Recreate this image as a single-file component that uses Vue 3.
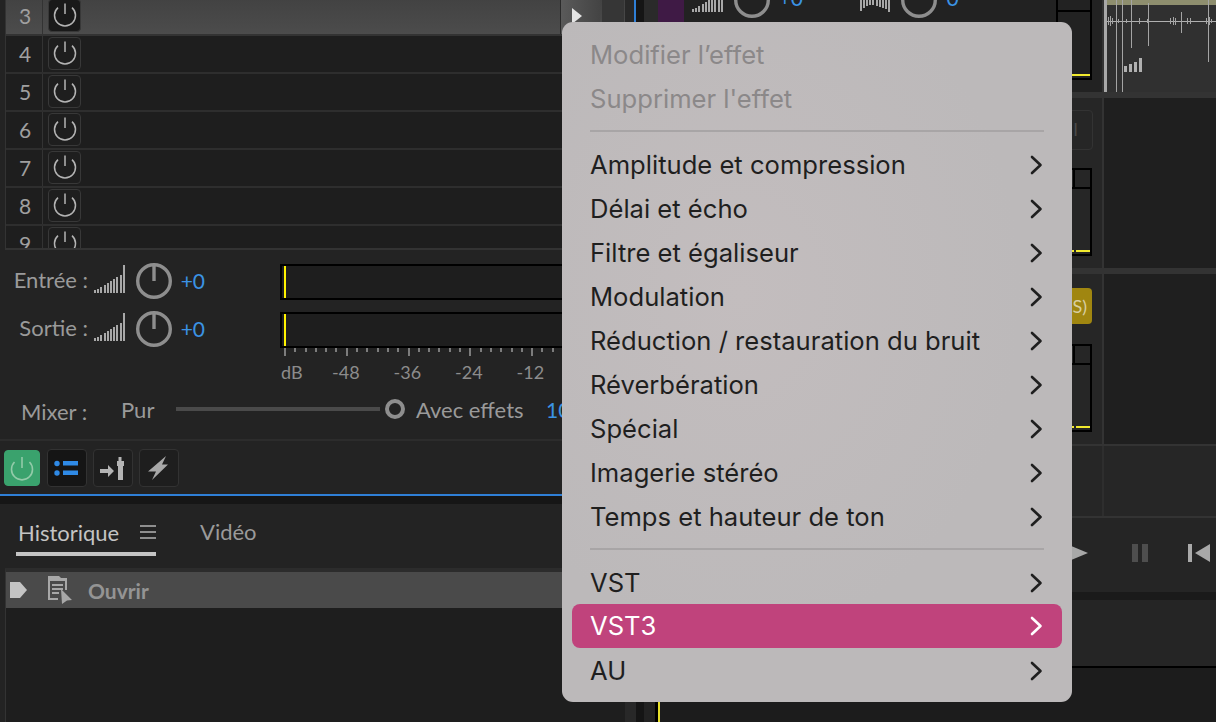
<script setup>
const rows = [3, 4, 5, 6, 7, 8, 9]
const levels = ['Entrée :', 'Sortie :']
const bars = [3, 4, 6, 8, 10, 12, 14, 16, 18, 28]
const hanging = [11, 8, 6, 5, 5, 6, 7, 8, 9, 12]
const ticks = Array.from({ length: 30 }, (_, i) => i)
const scale = ['dB', '-48', '-36', '-24', '-12']
const waveLines = [
  [12, 0, 92], [18, 0, 92], [27, 0, 48], [44, 3, 46], [77, 12, 33], [104, 0, 62],
  [4, 17, 25], [6, 16, 26], [8, 18, 24], [14, 19, 23], [22, 19, 23], [35, 18, 24],
  [43, 19, 23], [66, 18, 24], [69, 17, 25], [71, 18, 25], [83, 18, 24], [86, 18, 24],
  [102, 18, 24], [105, 17, 25], [107, 19, 23],
]
const signal = [
  { x: 20, h: 6 },
  { x: 25, h: 8 },
  { x: 30, h: 10 },
  { x: 35, h: 14 },
]
const menuGroups = [
  [
    { label: 'Modifier l’effet', off: true },
    { label: "Supprimer l'effet", off: true },
  ],
  [
    { label: 'Amplitude et compression', sub: true },
    { label: 'Délai et écho', sub: true },
    { label: 'Filtre et égaliseur', sub: true },
    { label: 'Modulation', sub: true },
    { label: 'Réduction / restauration du bruit', sub: true },
    { label: 'Réverbération', sub: true },
    { label: 'Spécial', sub: true },
    { label: 'Imagerie stéréo', sub: true },
    { label: 'Temps et hauteur de ton', sub: true },
  ],
  [
    { label: 'VST', sub: true },
    { label: 'VST3', sub: true, active: true },
    { label: 'AU', sub: true },
  ],
]
</script>

<template>
  <div class="screen">
    <section class="left">
      <div class="rack">
        <div v-for="n in rows" :key="n" class="rack-row" :class="{ current: n === 3 }">
          <span class="num">{{ n }}</span>
          <span class="power">
            <svg width="28" height="28" viewBox="0 0 28 28" fill="none" stroke="#b4b4b4" stroke-width="1.5">
              <path d="M7 6.6A10.5 10.5 0 1 0 21 6.6" />
              <path d="M14 2.5V13" />
            </svg>
          </span>
          <template v-if="n === 3">
            <span class="row-arrow"><i></i></span>
            <span class="row-side"></span>
          </template>
        </div>
      </div>

      <div class="levels">
        <div class="level-col">
          <div v-for="l in levels" :key="l" class="level">
            <span class="level-name">{{ l }}</span>
            <span class="bars"><i v-for="(b, i) in bars" :key="i" :style="{ height: b + 'px' }"></i></span>
            <svg class="knob" width="38" height="38" viewBox="0 0 38 38" fill="none" stroke="#8e8e8e" stroke-width="3.4">
              <circle cx="19" cy="19" r="16.3" />
              <path d="M19 3v16" />
            </svg>
            <span class="blue lift">+0</span>
          </div>
        </div>
        <div class="meter-col">
          <div class="meter"><i></i></div>
          <div class="meter"><i></i></div>
          <div class="ticks">
            <i v-for="t in ticks" :key="t" :class="{ major: t % 6 === 0 }"></i>
          </div>
          <div class="scale">
            <span v-for="s in scale" :key="s">{{ s }}</span>
          </div>
        </div>
      </div>

      <div class="mixer">
        <span class="mix-label">Mixer :</span>
        <span class="mix-pur">Pur</span>
        <span class="track"></span>
        <span class="knob-dot"></span>
        <span class="mix-avec">Avec effets</span>
        <span class="blue">100 %</span>
      </div>

      <div class="tools">
        <button class="tool green">
          <svg width="26" height="26" viewBox="0 0 26 26" fill="none" stroke="#93cba9" stroke-width="1.6">
            <path d="M5.5 7A10.5 10.5 0 1 0 20.5 7" />
            <path d="M13 2v11" />
          </svg>
        </button>
        <button class="tool wide dark">
          <svg width="26" height="16" viewBox="0 0 26 16" fill="#2f8ae6">
            <circle cx="3" cy="3.5" r="2.7" />
            <circle cx="3" cy="13" r="2.7" />
            <rect x="9" y="1" width="15" height="4.5" />
            <rect x="9" y="10.5" width="15" height="4.5" />
          </svg>
        </button>
        <button class="tool wide">
          <svg width="26" height="26" viewBox="0 0 26 26" fill="#b4b4b4">
            <path d="M0 14h8V10l6 6-6 6v-4H0z" />
            <rect x="18.5" y="2" width="3" height="4" />
            <rect x="17" y="6" width="7" height="5" />
            <rect x="18" y="11" width="5" height="14" />
          </svg>
        </button>
        <button class="tool wide">
          <svg width="22" height="26" viewBox="0 0 22 26" fill="#a8a8a8">
            <path d="M18 1 0 16.5h8L4 25 20 9.5h-6z" />
          </svg>
        </button>
      </div>

      <div class="history">
        <div class="tabs">
          <div class="tab-on">
            <span>Historique</span>
            <svg width="16" height="14" viewBox="0 0 16 14" stroke="#b4b4b4" stroke-width="1.4"><path d="M0 1h16M0 7h16M0 13h16" /></svg>
          </div>
          <span class="tab-off">Vidéo</span>
        </div>
        <div class="hist-list">
          <div class="hist-row">
            <svg class="play" width="18" height="18" viewBox="0 0 18 18" fill="#c4c4c4"><path d="M0 1h10l7 8-7 8H0z" /></svg>
            <svg class="doc" width="24" height="28" viewBox="0 0 24 28" fill="#a8a8a8">
              <path d="M0 0h11l2 2h6v12h-2V5H2v17h8v2H0z" />
              <rect x="4" y="8" width="11" height="2" />
              <rect x="4" y="12" width="11" height="2" />
              <rect x="4" y="16" width="7" height="2" />
              <path d="M13 13l11 11-5 .4L14 28z" />
            </svg>
            <span class="hist-text">Ouvrir</span>
          </div>
        </div>
      </div>
    </section>

    <section class="stage">
      <div class="line-row first">
        <div class="cell">
          <div class="top-strip">
            <span class="gutter"></span>
            <span class="edge"></span>
            <span class="black"></span>
            <span class="lane"></span>
            <span class="purple"></span>
            <div class="strip-body">
              <span class="bars cut"><i v-for="(b, i) in bars" :key="i" :style="{ height: b + 'px' }"></i></span>
              <svg class="knob cut-knob" width="38" height="38" viewBox="0 0 38 38" fill="none" stroke="#8e8e8e" stroke-width="3.4">
                <circle cx="19" cy="19" r="16.3" />
              </svg>
              <span class="blue cut-val">+0</span>
              <span class="bars hang"><i v-for="(b, i) in hanging" :key="i" :style="{ height: b + 'px' }"></i></span>
              <svg class="knob cut-knob" width="38" height="38" viewBox="0 0 38 38" fill="none" stroke="#8e8e8e" stroke-width="3.4">
                <circle cx="19" cy="19" r="16.3" />
              </svg>
              <span class="blue cut-val">0</span>
              <div class="top-fader">
                <span class="top-cap"></span>
                <div class="yellow"><i class="long"></i></div>
              </div>
            </div>
          </div>
        </div>
        <div class="cell side wave">
          <svg width="112" height="92" viewBox="0 0 112 92">
            <rect x="0" y="0" width="112" height="5" fill="#8e8e6e" />
            <rect x="0" y="0" width="3" height="92" fill="#a8a8a8" />
            <rect x="3" y="21" width="109" height="1" fill="#b0b0b0" />
            <rect v-for="l in waveLines" :key="l[0]" :x="l[0]" :y="l[1]" width="1" :height="l[2] - l[1]" fill="#a4a4a4" />
            <rect v-for="s in signal" :key="s.x" :x="s.x" :y="72 - s.h" width="3" :height="s.h" fill="#b0b0b0" />
          </svg>
        </div>
      </div>
      <div class="band"></div>
      <div class="line-row second">
        <div class="cell channel">
          <span class="chip">I</span>
          <div class="fader">
            <div class="cap"><i></i></div>
            <div class="yellow"><i class="dot"></i><i class="long"></i></div>
          </div>
        </div>
        <div class="cell side"></div>
      </div>
      <div class="band"></div>
      <div class="line-row second">
        <div class="cell channel">
          <span class="chip amber">(S)</span>
          <div class="fader">
            <div class="cap"><i></i></div>
            <div class="yellow"><i class="dot"></i><i class="long"></i></div>
          </div>
        </div>
        <div class="cell side"></div>
      </div>
      <div class="thin"></div>
      <div class="line-row fourth">
        <div class="cell"></div>
        <div class="cell side"></div>
      </div>
      <div class="thin"></div>
      <div class="transport">
        <i class="tri"></i>
        <span class="pause"><i></i><i></i></span>
        <span class="back"><i></i><i class="tri-back"></i></span>
      </div>
      <div class="dark-band"></div>
      <div class="lower"></div>
      <div class="bottom">
        <span class="gutter wide-g"></span>
        <span class="black"></span>
        <span class="lane short"></span>
        <span class="cursor"></span>
      </div>
    </section>

    <div class="menu">
      <template v-for="(group, g) in menuGroups" :key="g">
        <hr v-if="g > 0" />
        <div
          v-for="item in group"
          :key="item.label"
          class="item"
          :class="{ off: item.off, active: item.active }"
        >
          <span class="item-text">{{ item.label }}</span>
          <svg v-if="item.sub" width="14" height="20" viewBox="0 0 14 20" fill="none" stroke="currentColor" stroke-width="2.6" stroke-linecap="round" stroke-linejoin="round">
            <path d="M2 2 10.5 10 2 18" />
          </svg>
        </div>
      </template>
    </div>
  </div>
</template>

<style>
html,
body {
  margin: 0;
  background: #1e1e1e;
}
</style>

<style scoped>
.screen {
  position: relative;
  width: 1216px;
  height: 722px;
  overflow: hidden;
  display: flex;
  background: #232323;
  font-family: Lato, "Open Sans", sans-serif;
  font-size: 22px;
  color: #9a9a9a;
}
i {
  display: block;
}
.left {
  width: 625px;
  flex-shrink: 0;
  display: flex;
  flex-direction: column;
}
.rack {
  height: 250px;
  margin: -2px 0 0 5px;
  border-left: 1px solid #333;
  border-bottom: 2px solid #333;
  background: #1e1e1e;
  overflow: hidden;
  flex-shrink: 0;
}
.rack-row {
  height: 36px;
  border-bottom: 2px solid #2e2e2e;
  display: flex;
  align-items: center;
}
.rack-row.current {
  background: linear-gradient(#424242, #4c4c4c);
  border-bottom-color: #333;
}
.num {
  width: 37px;
  height: 100%;
  margin-right: 5px;
  border-right: 1px solid #333;
  text-align: center;
  font-size: 21px;
  line-height: 35px;
  padding-left: 2px;
  box-sizing: border-box;
  color: #a0a0a0;
  flex-shrink: 0;
}
.power {
  width: 33px;
  height: 33px;
  margin-top: -2px;
  border: 1px solid #383838;
  border-radius: 4px;
  display: flex;
  align-items: center;
  justify-content: center;
  background: #1e1e1e;
  box-sizing: border-box;
  flex-shrink: 0;
}
.current .power {
  background: #191919;
}
.row-arrow {
  margin-left: auto;
  width: 40px;
  height: 100%;
  background: linear-gradient(90deg, #5a5a5a, #444);
  border-left: 1px solid #2a2a2a;
  box-sizing: border-box;
}
.row-arrow i {
  margin: 10px 0 0 11px;
  width: 0;
  height: 0;
  border-left: 10px solid #e4e4e4;
  border-top: 8px solid transparent;
  border-bottom: 8px solid transparent;
}
.row-side {
  width: 22px;
  height: 100%;
  margin: 0 1px 0 2px;
  background: #363636;
}
.levels {
  display: flex;
  height: 135px;
  flex-shrink: 0;
}
.level-col {
  width: 280px;
  flex-shrink: 0;
  padding-top: 7px;
}
.level {
  height: 48px;
  display: flex;
  align-items: center;
}
.level-name {
  width: 88px;
  text-align: right;
  margin: -3px 6px 0 0;
  white-space: nowrap;
  flex-shrink: 0;
}
.bars {
  display: flex;
  align-items: flex-end;
  gap: 1.2px;
  height: 28px;
  margin-right: 10px;
  margin-top: -4px;
  flex-shrink: 0;
}
.bars i {
  width: 2px;
  background: #a8a8a8;
}
.knob {
  margin-right: 8px;
  flex-shrink: 0;
}
.blue {
  color: #3b93e4;
  font-size: 21px;
  white-space: nowrap;
}
.lift {
  margin-top: -2px;
}
.meter-col {
  flex: 1;
  padding-top: 14px;
  min-width: 0;
}
.meter {
  height: 36px;
  margin-bottom: 12px;
  border: 2px solid #000;
  border-right: none;
  background: #1e1e1e;
  box-sizing: border-box;
  padding-left: 2px;
}
.meter i {
  width: 2px;
  height: 100%;
  background: #fff200;
}
.ticks {
  display: flex;
  margin: -12px 0 0 4px;
  height: 8px;
  align-items: flex-start;
}
.ticks i {
  width: 2px;
  height: 4px;
  margin-right: 8.3px;
  background: #7c7c7c;
  flex-shrink: 0;
}
.ticks i.major {
  height: 8px;
}
.scale {
  display: flex;
  font-size: 18px;
  line-height: 24px;
  color: #8c8c8c;
  margin: 4px 0 0 1px;
}
.scale span {
  width: 61.5px;
}
.scale span:first-child {
  width: 51px;
}
.mixer {
  height: 56px;
  box-sizing: border-box;
  flex-shrink: 0;
  display: flex;
  align-items: center;
  padding: 0 0 6px 21px;
  border-bottom: 2px solid #2c2c2c;
}
.mix-label {
  width: 100px;
  flex-shrink: 0;
  margin-top: 4px;
}
.mix-pur {
  width: 55px;
  flex-shrink: 0;
}
.track {
  width: 204px;
  height: 4px;
  background: #4a4a4a;
  flex-shrink: 0;
}
.knob-dot {
  width: 20px;
  height: 20px;
  border: 4px solid #8e8e8e;
  border-radius: 50%;
  box-sizing: border-box;
  margin: 0 11px 0 5px;
  flex-shrink: 0;
}
.mix-avec {
  width: 130px;
  flex-shrink: 0;
}
.tools {
  display: flex;
  align-items: center;
  gap: 6px;
  height: 38px;
  padding: 8px 0 0 4px;
  flex-shrink: 0;
}
.tool {
  width: 40px;
  height: 38px;
  padding: 0;
  border: 1px solid #323232;
  border-radius: 4px;
  background: #1e1e1e;
  display: flex;
  align-items: center;
  justify-content: center;
}
.tool.green {
  width: 36px;
  height: 36px;
  background: #3aa26d;
  border-color: #3aa26d;
  margin-right: 1px;
}
.tool.dark {
  background: #151515;
}
.history {
  flex: 1;
  margin-top: 7px;
  border-top: 2px solid #2f7fd6;
  display: flex;
  flex-direction: column;
}
.history::before {
  content: "";
  display: block;
  height: 8px;
  background: #161616;
}
.tabs {
  height: 64px;
  display: flex;
  align-items: flex-start;
  padding-left: 16px;
  gap: 44px;
  flex-shrink: 0;
}
.tab-on {
  width: 140px;
  height: 52px;
  border-bottom: 4px solid #c4c4c4;
  box-sizing: border-box;
  padding: 8px 0 0 2px;
  display: flex;
  align-items: center;
  justify-content: space-between;
  color: #c4c4c4;
}
.tab-off {
  margin-top: 12px;
  line-height: 32px;
}
.hist-list {
  flex: 1;
  margin-left: 5px;
  border-left: 1px solid #333;
  border-top: 4px solid #2c2c2c;
  background: #1e1e1e;
}
.hist-row {
  height: 36px;
  background: #4a4a4a;
  display: flex;
  align-items: center;
}
.play {
  margin-left: 4px;
}
.doc {
  margin-left: 20px;
  flex-shrink: 0;
}
.hist-text {
  margin-left: 16px;
  font-size: 21px;
  font-weight: 700;
  color: #949494;
}
.stage {
  flex: 1;
  min-width: 0;
  display: flex;
  flex-direction: column;
  background: #262626;
}
.line-row {
  display: flex;
  flex-shrink: 0;
}
.line-row.first {
  height: 92px;
  overflow: hidden;
}
.line-row.second {
  height: 170px;
}
.line-row.fourth {
  height: 70px;
}
.cell {
  flex: 1;
  min-width: 0;
}
.cell.side {
  flex: none;
  width: 112px;
  border-left: 2px solid #333;
  background: #1f1f1f;
}
.cell.wave {
  background: #303030;
}
.fourth .cell.side {
  background: #262626;
  border-left-color: #2e2e2e;
}
.band {
  height: 6px;
  background: #333;
  flex-shrink: 0;
}
.thin {
  height: 2px;
  background: #333;
  flex-shrink: 0;
}
.top-strip {
  display: flex;
  height: 92px;
}
.gutter {
  width: 9px;
  background: #282828;
  flex-shrink: 0;
}
.edge {
  width: 2px;
  background: #2f7fd6;
  flex-shrink: 0;
}
.black {
  width: 8px;
  background: #151515;
  flex-shrink: 0;
}
.lane {
  width: 14px;
  background: #2a2a2a;
  flex-shrink: 0;
}
.purple {
  width: 26px;
  background: #3f1a45;
  flex-shrink: 0;
}
.strip-body {
  flex: 1;
  min-width: 0;
  display: flex;
  align-items: flex-start;
  background: #222;
  padding-left: 8px;
}
.bars.cut {
  margin: -16px 10px 0 0;
}
.bars.hang {
  margin: 0 10px 0 57px;
  align-items: flex-start;
}
.cut-knob {
  margin: -19px 8px 0 0;
}
.cut-val {
  width: 24px;
  line-height: 20px;
  margin-top: -12px;
  flex-shrink: 0;
}
.top-fader {
  width: 36px;
  height: 80px;
  box-sizing: border-box;
  margin: 0 10px 0 auto;
  border: 2px solid #000;
  border-top: none;
  display: flex;
  flex-direction: column;
  justify-content: space-between;
}
.top-cap {
  height: 10px;
  border-bottom: 2px solid #000;
}
.yellow {
  display: flex;
  justify-content: flex-end;
  gap: 2px;
  margin-bottom: 2px;
}
.yellow i {
  height: 2px;
  background: #f2ea2e;
}
.yellow .dot {
  width: 2px;
}
.yellow .long {
  width: 14px;
}
.top-fader .long {
  width: 18px;
}
.channel {
  display: flex;
  flex-direction: column;
  align-items: flex-end;
  padding-right: 10px;
}
.chip {
  width: 60px;
  height: 40px;
  margin: 12px -1px 18px 0;
  box-sizing: border-box;
  border: 1px solid #333;
  border-radius: 4px;
  padding-right: 14px;
  text-align: right;
  font-size: 17px;
  line-height: 38px;
  color: #4a4a4a;
}
.chip.amber {
  height: 36px;
  margin: 14px 0 20px;
  border: none;
  padding-right: 5px;
  background: #a08610;
  color: #d8cfa0;
  line-height: 36px;
  font-size: 18px;
}
.fader {
  width: 60px;
  height: 88px;
  box-sizing: border-box;
  border: 2px solid #000;
  display: flex;
  flex-direction: column;
  justify-content: space-between;
}
.cap {
  height: 17px;
  border-bottom: 2px solid #000;
  display: flex;
  justify-content: flex-end;
}
.cap i {
  width: 15px;
  border-left: 2px solid #000;
}
.transport {
  height: 74px;
  box-sizing: border-box;
  display: flex;
  align-items: center;
  padding: 0 0 4px 423px;
  background: #252525;
  flex-shrink: 0;
}
.tri {
  width: 0;
  height: 0;
  margin-left: 16px;
  border-left: 24px solid #a8a8a8;
  border-top: 10px solid transparent;
  border-bottom: 10px solid transparent;
  flex-shrink: 0;
}
.pause {
  display: flex;
  gap: 4px;
  margin-left: 44px;
}
.pause i {
  width: 6px;
  height: 18px;
  background: #4e4e4e;
}
.back {
  display: flex;
  align-items: center;
  gap: 3px;
  margin-left: 40px;
}
.back i:first-child {
  width: 4px;
  height: 18px;
  background: #aaa;
}
.back .tri-back {
  width: 0;
  height: 0;
  border-right: 15px solid #a8a8a8;
  border-top: 9px solid transparent;
  border-bottom: 9px solid transparent;
}
.dark-band {
  height: 8px;
  background: #1a1a1a;
  flex-shrink: 0;
}
.lower {
  height: 66px;
  background: #252525;
  border-bottom: 2px solid #000;
  flex-shrink: 0;
}
.bottom {
  flex: 1;
  display: flex;
  background: #1c1c1c;
}
.wide-g {
  width: 11px;
}
.lane.short {
  width: 11px;
  background: #222;
}
.cursor {
  width: 3px;
  margin-right: 2px;
  background: #000;
  border-right: 2px solid #e6df2a;
  box-sizing: content-box;
}
.menu {
  position: absolute;
  left: 562px;
  top: 22px;
  width: 510px;
  height: 680px;
  box-sizing: border-box;
  padding: 11px 10px 9px;
  border-radius: 11px;
  background: radial-gradient(ellipse at 35% 40%, #c3bdbe, #bcb9ba 60%);
  font-family: Inter, "Noto Sans", sans-serif;
  font-size: 25.6px;
  color: #1f1f1f;
}
.menu hr {
  margin: 9px 18px 11px;
  height: 2px;
  border: none;
  background: #a8a5a6;
}
.item {
  height: 44px;
  display: flex;
  align-items: center;
  justify-content: space-between;
  padding: 0 18px;
  border-radius: 8px;
}
.item-text {
  margin-top: -2px;
}
.item.off {
  color: #8b8889;
}
.item.active {
  margin: -1px 0 1px;
  background: #c0437c;
  color: #fff;
}
</style>
